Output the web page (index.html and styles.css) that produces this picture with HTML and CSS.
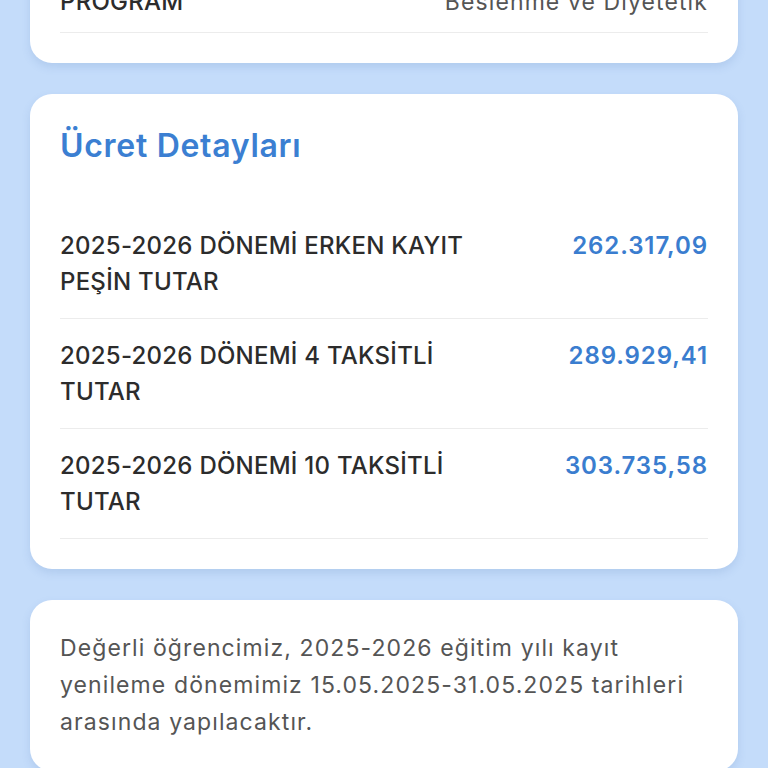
FILE: index.html
```html
<!DOCTYPE html>
<html lang="tr">
<head>
<meta charset="utf-8">
<link rel="stylesheet" href="styles.css">
</head>
<body>
<div class="page">
  <section class="card card-top">
    <div class="row row-top">
      <span class="label">PROGRAM</span>
      <span class="program">Beslenme ve Diyetetik</span>
    </div>
  </section>

  <section class="card card-fees">
    <h2 class="title">Ücret Detayları</h2>
    <div class="row">
      <span class="label">2025-2026 DÖNEMİ ERKEN KAYIT<br>PEŞİN TUTAR</span>
      <span class="amount">262.317,09</span>
    </div>
    <div class="row">
      <span class="label">2025-2026 DÖNEMİ 4 TAKSİTLİ<br>TUTAR</span>
      <span class="amount">289.929,41</span>
    </div>
    <div class="row">
      <span class="label">2025-2026 DÖNEMİ 10 TAKSİTLİ<br>TUTAR</span>
      <span class="amount">303.735,58</span>
    </div>
  </section>

  <section class="card card-note">
    <p class="note">Değerli öğrencimiz, 2025-2026 eğitim yılı kayıt yenileme dönemimiz 15.05.2025-31.05.2025 tarihleri arasında yapılacaktır.</p>
  </section>
</div>
</body>
</html>
```

FILE: styles.css
```css
html, body {
  margin: 0;
  padding: 0;
  background: #c4dcfa;
  height: 100%;
  overflow: hidden;
}
.page {
  display: flex;
  flex-direction: column;
  gap: 31px;
  padding: 0 30px;
  margin-top: -56px;
}
.card {
  background: #fff;
  border-radius: 22px;
  padding: 0 30px;
  box-shadow: 0 4px 8px rgba(90, 130, 190, 0.18);
}
.card-top {
  padding-bottom: 30px;
}
.row {
  display: flex;
  justify-content: space-between;
  align-items: flex-start;
  padding: 19px 0 18px;
  border-bottom: 1px solid #ececec;
}
.row-top {
  padding: 40px 0 12px;
}
.label {
  font-family: "Inter", "Noto Sans", sans-serif;
  font-weight: 500;
  font-size: 24px;
  letter-spacing: 0.25px;
  line-height: 36px;
  color: #2c2c2c;
}
.program {
  font-family: "Inter", sans-serif;
  font-size: 23px;
  letter-spacing: 1.1px;
  line-height: 36px;
  color: #555;
}
.amount {
  font-family: "Inter", sans-serif;
  font-weight: 600;
  font-size: 24px;
  letter-spacing: 0.9px;
  line-height: 36px;
  color: #3a7dcf;
}
.card-fees {
  padding-top: 30px;
  padding-bottom: 30px;
}
.title {
  margin: 0 0 41px;
  font-family: "Inter", sans-serif;
  font-weight: 600;
  font-size: 32px;
  letter-spacing: 0.7px;
  line-height: 44px;
  color: #3b7fd2;
}
.card-note {
  padding-top: 30px;
  padding-bottom: 30px;
}
.note {
  margin: 0;
  font-family: "Inter", sans-serif;
  font-size: 23px;
  letter-spacing: 1.1px;
  line-height: 37px;
  color: #555;
}
```
